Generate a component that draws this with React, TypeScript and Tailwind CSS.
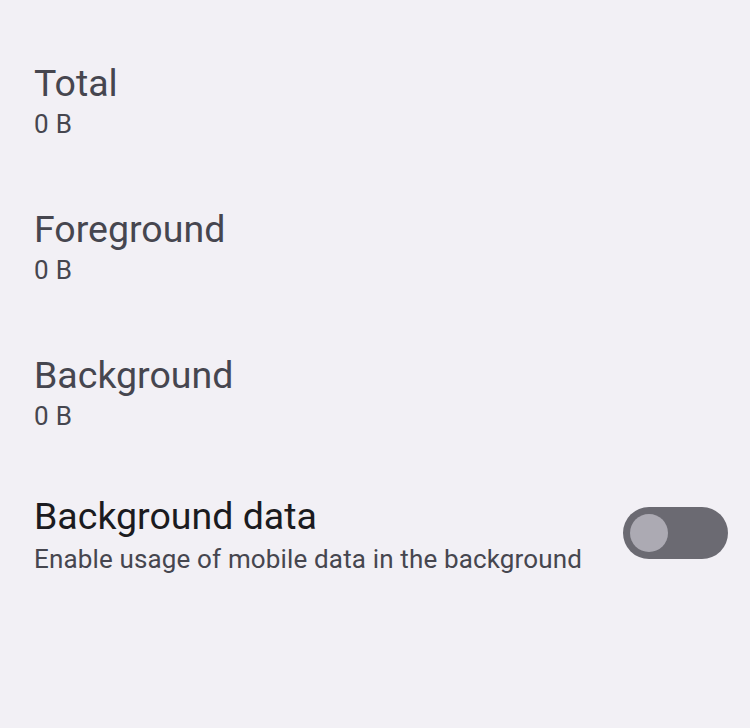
import React from "react";

function Item({ title, value }: { title: string; value: string }) {
  return (
    <div className="flex flex-col">
      <div className="text-[37.5px] leading-[44px] text-[#46464f]">{title}</div>
      <div className="mt-[4px] text-[26px] leading-[30px] tracking-[0.3px] text-[#46464f]">{value}</div>
    </div>
  );
}

export default function App() {
  return (
    <div
      className="w-[750px] h-[728px] bg-[#f2f0f5] overflow-hidden pl-[34px] pr-[22px] pt-[61px]"
      style={{ fontFamily: "Roboto, 'Noto Sans', sans-serif" }}
    >
      <div className="flex flex-col gap-[68px]">
        <Item title="Total" value="0 B" />
        <Item title="Foreground" value="0 B" />
        <Item title="Background" value="0 B" />
        <div className="flex items-start justify-between -mt-[5px]">
          <div className="flex flex-col">
            <div className="text-[37.5px] leading-[44px] text-[#1b1b20]">Background data</div>
            <div className="mt-[6px] text-[26px] leading-[30px] tracking-[0.15px] text-[#46464f]">
              Enable usage of mobile data in the background
            </div>
          </div>
          <div className="mt-[13px] w-[105px] h-[52px] rounded-full bg-[#6b6a72] flex items-center pl-[7px]">
            <div className="w-[38px] h-[38px] rounded-full bg-[#acaab3]" />
          </div>
        </div>
      </div>
    </div>
  );
}
